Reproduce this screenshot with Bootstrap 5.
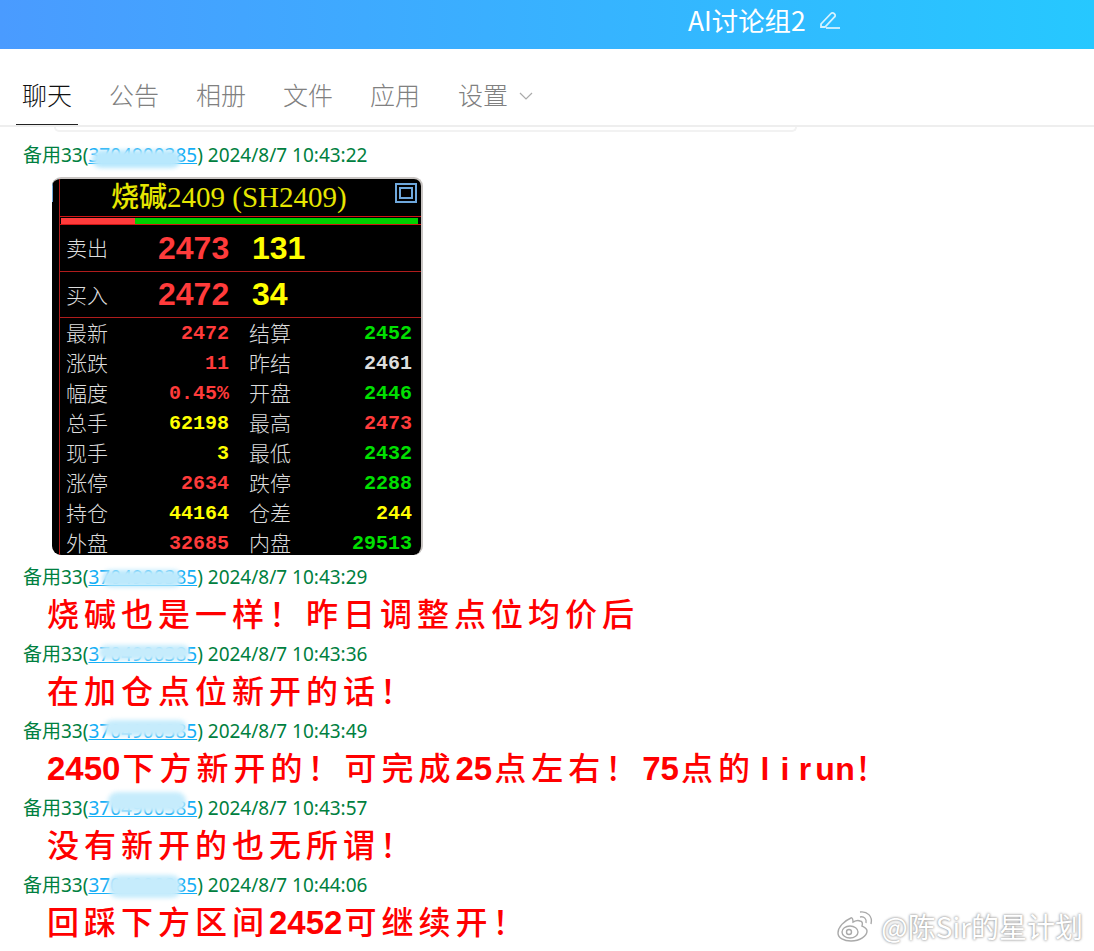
<!DOCTYPE html>
<html lang="zh-CN">
<head>
  <meta charset="UTF-8" />
  <meta name="viewport" content="width=device-width, initial-scale=1" />
  <title>AI讨论组2</title>
  <link href="https://cdn.jsdelivr.net/npm/bootstrap@5.3.3/dist/css/bootstrap.min.css" rel="stylesheet" />
  <style>
    body {
      background-color: #fff;
      font-family: "Noto Sans CJK SC", "Noto Sans", sans-serif;
      height: 951px;
      overflow: hidden;
      position: relative;
    }
    .top-bar {
      height: 49px;
      padding: 0 0 9px 688px;
      background: linear-gradient(90deg, #4a9bff, #26c8ff);
      color: #fff;
      font-size: 26.4px;
      gap: 13px;
    }
    .tab-bar {
      height: 78px;
      border-bottom: 2px solid #eee;
      padding-left: 16px;
      gap: 25px;
      font-size: 25px;
      font-weight: 300;
      color: #808080;
    }
    .tab-item {
      height: 76px;
      padding: 27px 6px 0;
      line-height: 36px;
    }
    .tab-item:last-child {
      margin-left: 1px;
      gap: 11px;
    }
    .tab-on {
      color: #111;
      border-bottom: 1px solid #222;
    }
    .old-box {
      width: 743px;
      height: 5px;
      margin-left: 54px;
      border: 2px solid #f2f2f2;
      border-top: 0;
      border-radius: 0 0 8px 8px;
    }
    .msg-list {
      margin-top: 10px;
    }
    .msg-head {
      margin: 0 0 0 23px;
      height: 27px;
      line-height: 27px;
      font-family: "Noto Sans", "Noto Sans CJK SC", sans-serif;
      font-size: 19px;
      color: #008040;
      white-space: nowrap;
    }
    .msg-link {
      color: #14aef5;
      position: relative;
      text-decoration: underline;
    }
    .smudge {
      position: absolute;
      background: #c6ecfc;
      border-radius: 9px;
      filter: blur(2px);
    }
    .sm-1 { left: 4px; top: 8px; width: 89px; height: 18px; background: #b8e8fd; }
    .sm-2 { left: 14px; top: 6px; width: 80px; height: 17px; background: #bce9fc; }
    .sm-3 { left: 11px; top: 4px; width: 91px; height: 15px; }
    .sm-4 { left: 16px; top: 2px; width: 83px; height: 16px; }
    .sm-5 { left: 20px; top: -3px; width: 78px; height: 20px; }
    .sm-6 { left: 21px; top: 3px; width: 72px; height: 23px; }
    .msg-text {
      margin: 0 0 0 47px;
      height: 50px;
      line-height: 42px;
      font-size: 32px;
      font-weight: 500;
      letter-spacing: 5px;
      color: #f00;
      white-space: nowrap;
    }
    .msg-text b {
      margin-right: 2px;
      font-family: "Liberation Sans", sans-serif;
      font-size: 33px;
      font-weight: 700;
      letter-spacing: 0;
    }
    .msg-text i {
      display: inline-block;
      width: 20px;
      font-family: "Liberation Sans", sans-serif;
      font-style: normal;
      font-weight: 700;
      letter-spacing: 0;
      text-align: center;
    }
    .quote-box {
      width: 371px;
      height: 378px;
      margin: 8px 0 9px 52px;
      background: #000;
      border-radius: 9px;
      border-top: 2px solid #c9c5c3;
      border-right: 2px solid #c9c5c3;
      overflow: hidden;
      position: relative;
    }
    .quote-title {
      height: 37px;
      padding-left: 59px;
      line-height: 33px;
      color: #e6e600;
      font-family: "Liberation Serif", "Noto Sans CJK SC", serif;
      font-size: 29px;
      white-space: nowrap;
    }
    .quote-title span {
      font-family: "Noto Sans CJK SC", sans-serif;
      font-size: 28px;
      font-weight: 500;
    }
    .win-btn {
      position: absolute;
      top: 4px;
      right: 4px;
      width: 22px;
      height: 20px;
      border: 2px solid #6fa8dc;
      padding: 2px;
    }
    .win-btn::after {
      content: "";
      display: block;
      height: 100%;
      border: 2px solid #6fa8dc;
    }
    .side-btn {
      position: absolute;
      top: 1px;
      left: -6px;
      width: 7px;
      height: 22px;
      border: 2px solid #6fa8dc;
    }
    .red-rail {
      position: absolute;
      left: 7px;
      top: 0;
      bottom: 0;
      width: 1px;
      background: #b01c1c;
    }
    .ratio-bar {
      height: 9px;
      border-top: 1px solid #d01515;
      border-bottom: 1px solid #d01515;
      margin-left: 8px;
      padding: 1px 3px 0 1px;
    }
    .ratio-red { width: 74px; background: #ff3b3b; }
    .ratio-green { flex: 1; background: #00d000; }
    .quote-big {
      height: 46.5px;
      margin-left: 8px;
      padding-left: 6px;
      border-bottom: 1px solid #b01c1c;
      font-family: "Liberation Sans", sans-serif;
      font-size: 32px;
      font-weight: 700;
      white-space: nowrap;
    }
    .quote-big em {
      font-family: "Noto Sans CJK SC", sans-serif;
      font-style: normal;
      font-size: 21px;
      font-weight: 300;
      color: #ddd;
      width: 92px;
    }
    .quote-big u { text-decoration: none; color: #ff3b3b; width: 94px; }
    .quote-big s { text-decoration: none; color: #ff0; }
    .quote-grid {
      display: grid;
      grid-template-columns: 163px 20px 163px;
      grid-auto-rows: 30px;
      margin-left: 14px;
      padding-top: 1px;
      line-height: 30px;
      font-family: "Liberation Mono", monospace;
      font-size: 20px;
      font-weight: 700;
    }
    .quote-cell { text-align: right; }
    .quote-cell em {
      float: left;
      line-height: 26px;
      font-family: "Noto Sans CJK SC", sans-serif;
      font-style: normal;
      font-size: 21px;
      font-weight: 300;
      color: #ddd;
    }
    .c-up { color: #ff3b3b; }
    .c-down { color: #00e000; }
    .c-vol { color: #ff0; }
    .c-flat { color: #ddd; }
    .stamp {
      position: absolute;
      right: 11px;
      bottom: 8px;
      gap: 7px;
      font-size: 28px;
      line-height: 34px;
      color: #fff;
      text-shadow: 0 0 3px #999, 0 0 2px #aaa;
    }
  </style>
</head>
<body>
  <div class="top-bar d-flex align-items-center">
    <span>AI讨论组2</span>
    <svg width="22" height="20" viewBox="0 0 22 20" fill="none" stroke="#d5f2ff" stroke-width="1.8">
      <path d="M2 14 12 3.5a2 2 0 0 1 3 0l.5.5a2 2 0 0 1 0 3L6 17H2z" />
      <path d="M7 18h14" />
    </svg>
  </div>

  <div class="tab-bar d-flex align-items-start">
    <div class="tab-item tab-on">聊天</div>
    <div class="tab-item">公告</div>
    <div class="tab-item">相册</div>
    <div class="tab-item">文件</div>
    <div class="tab-item">应用</div>
    <div class="tab-item d-flex align-items-start">设置
      <svg class="mt-3" width="14" height="8" viewBox="0 0 14 8" fill="none" stroke="#aaa" stroke-width="1.2"><path d="M1 1l6 6 6-6" /></svg>
    </div>
  </div>
  <div class="old-box"></div>

  <div class="msg-list">
    <p class="msg-head">备用33(<a class="msg-link" href="#">3704900385<span class="smudge sm-1"></span></a>) 2024/8/7 10:43:22</p>

    <div class="quote-box">
      <div class="red-rail"></div>
      <div class="side-btn"></div>
      <div class="quote-title"><span>烧碱</span>2409 (SH2409)</div>
      <div class="win-btn"></div>
      <div class="ratio-bar d-flex"><div class="ratio-red"></div><div class="ratio-green"></div></div>
      <div class="quote-big d-flex align-items-center"><em>卖出</em><u>2473</u><s>131</s></div>
      <div class="quote-big d-flex align-items-center"><em>买入</em><u>2472</u><s>34</s></div>
      <div class="quote-grid" id="quote-grid"></div>
    </div>

    <p class="msg-head">备用33(<a class="msg-link" href="#">3704900385<span class="smudge sm-2"></span></a>) 2024/8/7 10:43:29</p>
    <p class="msg-text">烧碱也是一样！昨日调整点位均价后</p>

    <p class="msg-head">备用33(<a class="msg-link" href="#">3704900385<span class="smudge sm-3"></span></a>) 2024/8/7 10:43:36</p>
    <p class="msg-text">在加仓点位新开的话！</p>

    <p class="msg-head">备用33(<a class="msg-link" href="#">3704900385<span class="smudge sm-4"></span></a>) 2024/8/7 10:43:49</p>
    <p class="msg-text"><b>2450</b>下方新开的！可完成<b>25</b>点左右！<b>75</b>点的<i>l</i><i>i</i><i>r</i><i>u</i><i>n</i>！</p>

    <p class="msg-head">备用33(<a class="msg-link" href="#">3704900385<span class="smudge sm-5"></span></a>) 2024/8/7 10:43:57</p>
    <p class="msg-text">没有新开的也无所谓！</p>

    <p class="msg-head">备用33(<a class="msg-link" href="#">3704900385<span class="smudge sm-6"></span></a>) 2024/8/7 10:44:06</p>
    <p class="msg-text">回踩下方区间<b>2452</b>可继续开！</p>
  </div>

  <div class="stamp d-flex align-items-center">
    <svg width="38" height="32" viewBox="0 0 38 32" fill="#fff" stroke="#aaa" stroke-width="1.4">
      <path d="M15 8C8 11 2 17 2 23c0 5 6 8 13 8 9 0 16-5 16-10 0-3-3-4-5-5 1-3 0-5-2-5-2-1-5 0-7 1 0-3-1-5-2-4z" />
      <ellipse cx="14" cy="22" rx="8" ry="6" />
      <circle cx="13" cy="22" r="2.5" />
      <path d="M24 7c4-1 7 2 6 6M24 2c7-1 13 4 11 12" fill="none" />
    </svg>
    <span>@陈Sir的星计划</span>
  </div>

  <script>
    // label, value, colour class for each cell of the quote table
    const quoteRows = [
      ['最新', '2472', 'c-up', '结算', '2452', 'c-down'],
      ['涨跌', '11', 'c-up', '昨结', '2461', 'c-flat'],
      ['幅度', '0.45%', 'c-up', '开盘', '2446', 'c-down'],
      ['总手', '62198', 'c-vol', '最高', '2473', 'c-up'],
      ['现手', '3', 'c-vol', '最低', '2432', 'c-down'],
      ['涨停', '2634', 'c-up', '跌停', '2288', 'c-down'],
      ['持仓', '44164', 'c-vol', '仓差', '244', 'c-vol'],
      ['外盘', '32685', 'c-up', '内盘', '29513', 'c-down']
    ];
    const quoteGrid = document.getElementById('quote-grid');
    quoteRows.forEach(row => {
      quoteGrid.innerHTML +=
        `<div class="quote-cell ${row[2]}"><em>${row[0]}</em>${row[1]}</div><div></div>` +
        `<div class="quote-cell ${row[5]}"><em>${row[3]}</em>${row[4]}</div>`;
    });
  </script>
  <script src="https://cdn.jsdelivr.net/npm/bootstrap@5.3.3/dist/js/bootstrap.bundle.min.js"></script>
</body>
</html>
